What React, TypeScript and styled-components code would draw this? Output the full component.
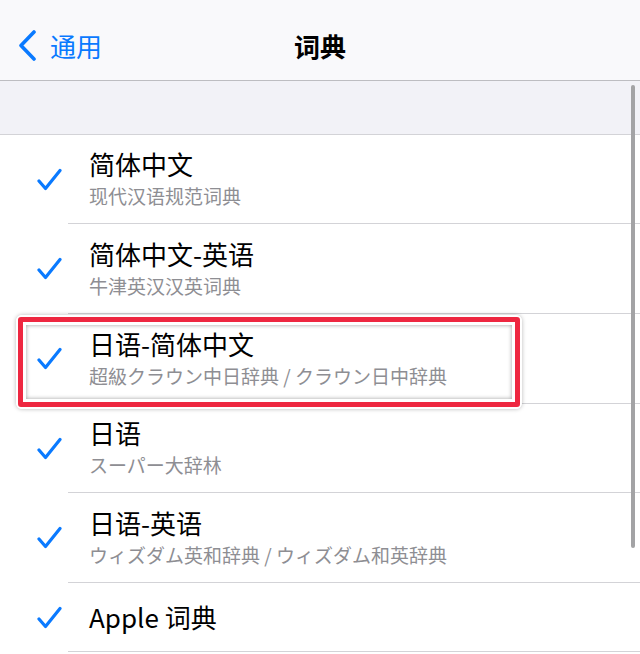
import React from "react";
import styled, { createGlobalStyle } from "styled-components";

const Global = createGlobalStyle`
  html, body { margin: 0; padding: 0; background: #ffffff; }
  body { font-family: "Noto Sans CJK SC", "Noto Sans", sans-serif; -webkit-font-smoothing: antialiased; }
`;

const Page = styled.div`
  position: relative;
  width: 640px;
  height: 654px;
  overflow: hidden;
  background: #ffffff;
`;

const NavBar = styled.header`
  height: 81px;
  box-sizing: border-box;
  border-bottom: 1px solid #bdbdc1;
  background: #f9f9fb;
  display: grid;
  grid-template-columns: 1fr auto 1fr;
  align-items: center;
  padding-top: 11px;
`;

const BackButton = styled.div`
  display: flex;
  align-items: center;
  gap: 13px;
  padding-left: 18px;
  color: #0a7aff;
  font-size: 26px;
  line-height: 34px;
`;

const NavTitle = styled.div`
  font-size: 26px;
  font-weight: 700;
  line-height: 34px;
  color: #000;
`;

const GroupHeader = styled.div`
  height: 54px;
  box-sizing: border-box;
  background: #f2f2f7;
  border-bottom: 1px solid #d3d3d7;
`;

const Row = styled.div<{ $h: number }>`
  position: relative;
  display: flex;
  height: ${(p) => p.$h}px;
`;

const CheckCell = styled.div`
  width: 68px;
  flex: none;
  display: flex;
  align-items: center;
  padding-left: 36px;
  box-sizing: border-box;
`;

const Content = styled.div`
  flex: 1;
  display: flex;
  flex-direction: column;
  justify-content: center;
  padding-left: 21px;
  border-bottom: 1px solid #d3d3d7;
`;

const Title = styled.div`
  font-size: 26px;
  line-height: 34px;
  color: #000;
`;

const Subtitle = styled.div`
  font-size: 19px;
  line-height: 30px;
  color: #8e8e93;
`;

const Scrollbar = styled.div`
  position: absolute;
  left: 631px;
  top: 85px;
  width: 4px;
  height: 463px;
  border-radius: 2px;
  background: #a3a3a5;
`;

/* Annotation frame drawn over the highlighted row; interior is transparent */
const Highlight = styled.div`
  position: absolute;
  left: 16px;
  top: 1px;
  width: 506px;
  height: 94px;
  box-sizing: border-box;
  border-radius: 6px;
  border: 2px solid #ffffff;
  box-shadow: 0 0 4px rgba(0, 0, 0, 0.28);
  z-index: 2;
  pointer-events: none;
`;

const RedFrame = styled.div`
  height: 100%;
  box-sizing: border-box;
  border: 5px solid #ee2740;
  border-radius: 3px;
`;

const InnerFrame = styled.div`
  height: 100%;
  box-sizing: border-box;
  border: 3px solid #ffffff;
  box-shadow: inset 0 0 4px rgba(0, 0, 0, 0.38);
`;

const Check = () => (
  <svg width="26" height="26" viewBox="0 0 26 26" fill="none">
    <path
      d="M3 14 L9.5 21.5 L24 3.5"
      stroke="#0a7aff"
      strokeWidth="3.2"
      strokeLinecap="round"
      strokeLinejoin="round"
    />
  </svg>
);

const Chevron = () => (
  <svg width="19" height="32" viewBox="0 0 19 32" fill="none">
    <path
      d="M16 2 L3 15.5 L16 29"
      stroke="#0a7aff"
      strokeWidth="3.6"
      strokeLinecap="round"
      strokeLinejoin="round"
    />
  </svg>
);

type Item = { title: string; sub?: string; h: number; highlight?: boolean };

const items: Item[] = [
  { title: "简体中文", sub: "现代汉语规范词典", h: 89 },
  { title: "简体中文-英语", sub: "牛津英汉汉英词典", h: 90 },
  { title: "日语-简体中文", sub: "超級クラウン中日辞典 / クラウン日中辞典", h: 90, highlight: true },
  { title: "日语", sub: "スーパー大辞林", h: 89 },
  { title: "日语-英语", sub: "ウィズダム英和辞典 / ウィズダム和英辞典", h: 90 },
  { title: "Apple 词典", h: 69 },
];

export default function App() {
  return (
    <Page>
      <Global />
      <NavBar>
        <BackButton>
          <Chevron />
          <span>通用</span>
        </BackButton>
        <NavTitle>词典</NavTitle>
        <div />
      </NavBar>
      <GroupHeader />
      {items.map((it) => (
        <Row key={it.title} $h={it.h}>
          <CheckCell>
            <Check />
          </CheckCell>
          <Content>
            <Title>{it.title}</Title>
            {it.sub && <Subtitle>{it.sub}</Subtitle>}
          </Content>
          {it.highlight && (
            <Highlight>
              <RedFrame>
                <InnerFrame />
              </RedFrame>
            </Highlight>
          )}
        </Row>
      ))}
      <Scrollbar />
    </Page>
  );
}
